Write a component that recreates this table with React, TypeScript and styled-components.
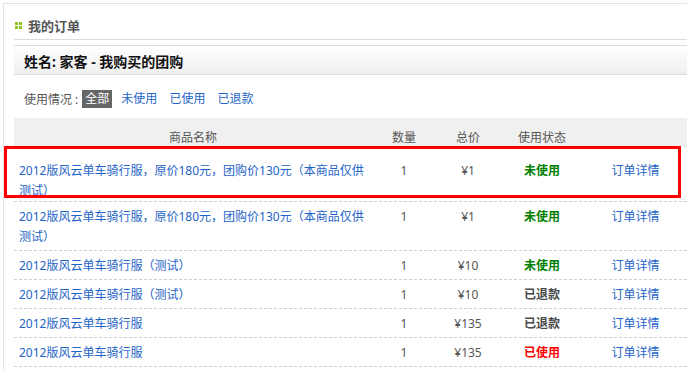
import React from 'react';
import styled, { createGlobalStyle } from 'styled-components';

type Status = 'unused' | 'used' | 'refunded';

interface OrderRow {
  id: number;
  name: string;
  amount: number;
  price: string;
  status: Status;
}

const orders: OrderRow[] = [
  { id: 1, name: '2012版风云单车骑行服，原价180元，团购价130元（本商品仅供测试）', amount: 1, price: '¥1', status: 'unused' },
  { id: 2, name: '2012版风云单车骑行服，原价180元，团购价130元（本商品仅供测试）', amount: 1, price: '¥1', status: 'unused' },
  { id: 3, name: '2012版风云单车骑行服（测试）', amount: 1, price: '¥10', status: 'unused' },
  { id: 4, name: '2012版风云单车骑行服（测试）', amount: 1, price: '¥10', status: 'refunded' },
  { id: 5, name: '2012版风云单车骑行服', amount: 1, price: '¥135', status: 'refunded' },
  { id: 6, name: '2012版风云单车骑行服', amount: 1, price: '¥135', status: 'used' }
];

const statusText: Record<Status, string> = {
  unused: '未使用',
  used: '已使用',
  refunded: '已退款'
};

const filters = ['未使用', '已使用', '已退款'];

export default function App() {
  return (
    <Page>
      <GlobalStyle />
      <Panel>
        <TitleBar>
          <TitleIcon>
            <i />
            <i />
            <i />
            <i />
          </TitleIcon>
          我的订单
        </TitleBar>
        <NameBar>姓名: 家客 - 我购买的团购</NameBar>
        <FilterBar>
          <FilterLabel>使用情况 :</FilterLabel>
          <FilterItem $active>全部</FilterItem>
          {filters.map((f) => (
            <FilterItem key={f}>{f}</FilterItem>
          ))}
        </FilterBar>
        <Table>
          <HeadRow>
            <Cell>商品名称</Cell>
            <Cell>数量</Cell>
            <Cell>总价</Cell>
            <Cell>使用状态</Cell>
            <Cell />
          </HeadRow>
          {orders.map((order, i) => (
            <BodyRow key={order.id} $first={i === 0}>
              <NameCell>{order.name}</NameCell>
              <Cell>{order.amount}</Cell>
              <Cell>{order.price}</Cell>
              <StatusCell $status={order.status}>{statusText[order.status]}</StatusCell>
              <LinkCell>订单详情</LinkCell>
            </BodyRow>
          ))}
        </Table>
      </Panel>
      <Highlight />
    </Page>
  );
}

const GlobalStyle = createGlobalStyle`
  html, body {
    margin: 0;
    padding: 0;
    background: #fff;
    overflow: hidden;
  }
  body {
    font-family: "Noto Sans", "Noto Sans CJK SC", sans-serif;
    font-size: 12px;
    color: #555;
  }
`;

const Page = styled.div`
  position: relative;
  width: 690px;
  height: 371px;
  overflow: hidden;
`;

const Panel = styled.div`
  margin: 3px 0 0 3px;
  border-top: 1px solid #e3e3e3;
  border-left: 1px solid #e3e3e3;
  padding-left: 10px;
  width: 673px;
  height: 400px;
`;

const TitleBar = styled.div`
  display: flex;
  align-items: center;
  gap: 6px;
  height: 36px;
  box-sizing: border-box;
  padding: 7px 0 0 1px;
  border-bottom: 1px solid #dcdcdc;
  font-size: 13px;
  font-weight: bold;
  color: #555;
`;

const TitleIcon = styled.span`
  display: grid;
  grid-template-columns: 3px 3px;
  grid-template-rows: 3px 3px;
  gap: 1px;
  > i {
    background: #8dc21f;
  }
`;

const NameBar = styled.div`
  margin-top: 5px;
  height: 30px;
  box-sizing: border-box;
  padding: 2px 0 0 10px;
  display: flex;
  align-items: center;
  border-top: 1px solid #dcdcdc;
  border-bottom: 1px solid #dcdcdc;
  background: linear-gradient(#ffffff, #efefef);
  font-size: 14px;
  font-weight: bold;
  color: #111;
`;

const FilterBar = styled.div`
  display: flex;
  align-items: center;
  gap: 6px;
  height: 43px;
  box-sizing: border-box;
  padding: 4px 0 0 10px;
`;

const FilterLabel = styled.span`
  color: #555;
  margin-right: -2px;
`;

const FilterItem = styled.span<{ $active?: boolean }>`
  padding: 0 3px;
  height: 18px;
  line-height: 18px;
  color: ${(p) => (p.$active ? '#fff' : '#1e64c8')};
  background: ${(p) => (p.$active ? '#666' : 'transparent')};
`;

const Table = styled.div`
  display: flex;
  flex-direction: column;
`;

const Row = styled.div`
  display: grid;
  grid-template-columns: 358px 64px 64px 84px 1fr;
  align-items: start;
  line-height: 20px;
`;

const HeadRow = styled(Row)`
  height: 29px;
  box-sizing: border-box;
  padding-top: 10px;
  background: #f0f0f0;
  text-align: center;
`;

const BodyRow = styled(Row)<{ $first?: boolean }>`
  padding: ${(p) => (p.$first ? '14px 0 0' : '5px 0 3px')};
  border-bottom: 1px dashed #cfcfcf;
  text-align: center;
`;

const Cell = styled.div`
  color: #555;
`;

const NameCell = styled.div`
  text-align: left;
  padding: 0 5px;
  color: #1e64c8;
`;

const statusColor: Record<Status, string> = {
  unused: '#008000',
  used: '#ff0000',
  refunded: '#4a4a4a'
};

const StatusCell = styled.div<{ $status: Status }>`
  color: ${(p) => statusColor[p.$status]};
  font-weight: bold;
`;

const LinkCell = styled.div`
  color: #1e64c8;
`;

const Highlight = styled.div`
  position: absolute;
  left: 4px;
  top: 146px;
  width: 677px;
  height: 52px;
  box-sizing: border-box;
  border: 3px solid #ff0000;
  pointer-events: none;
`;
